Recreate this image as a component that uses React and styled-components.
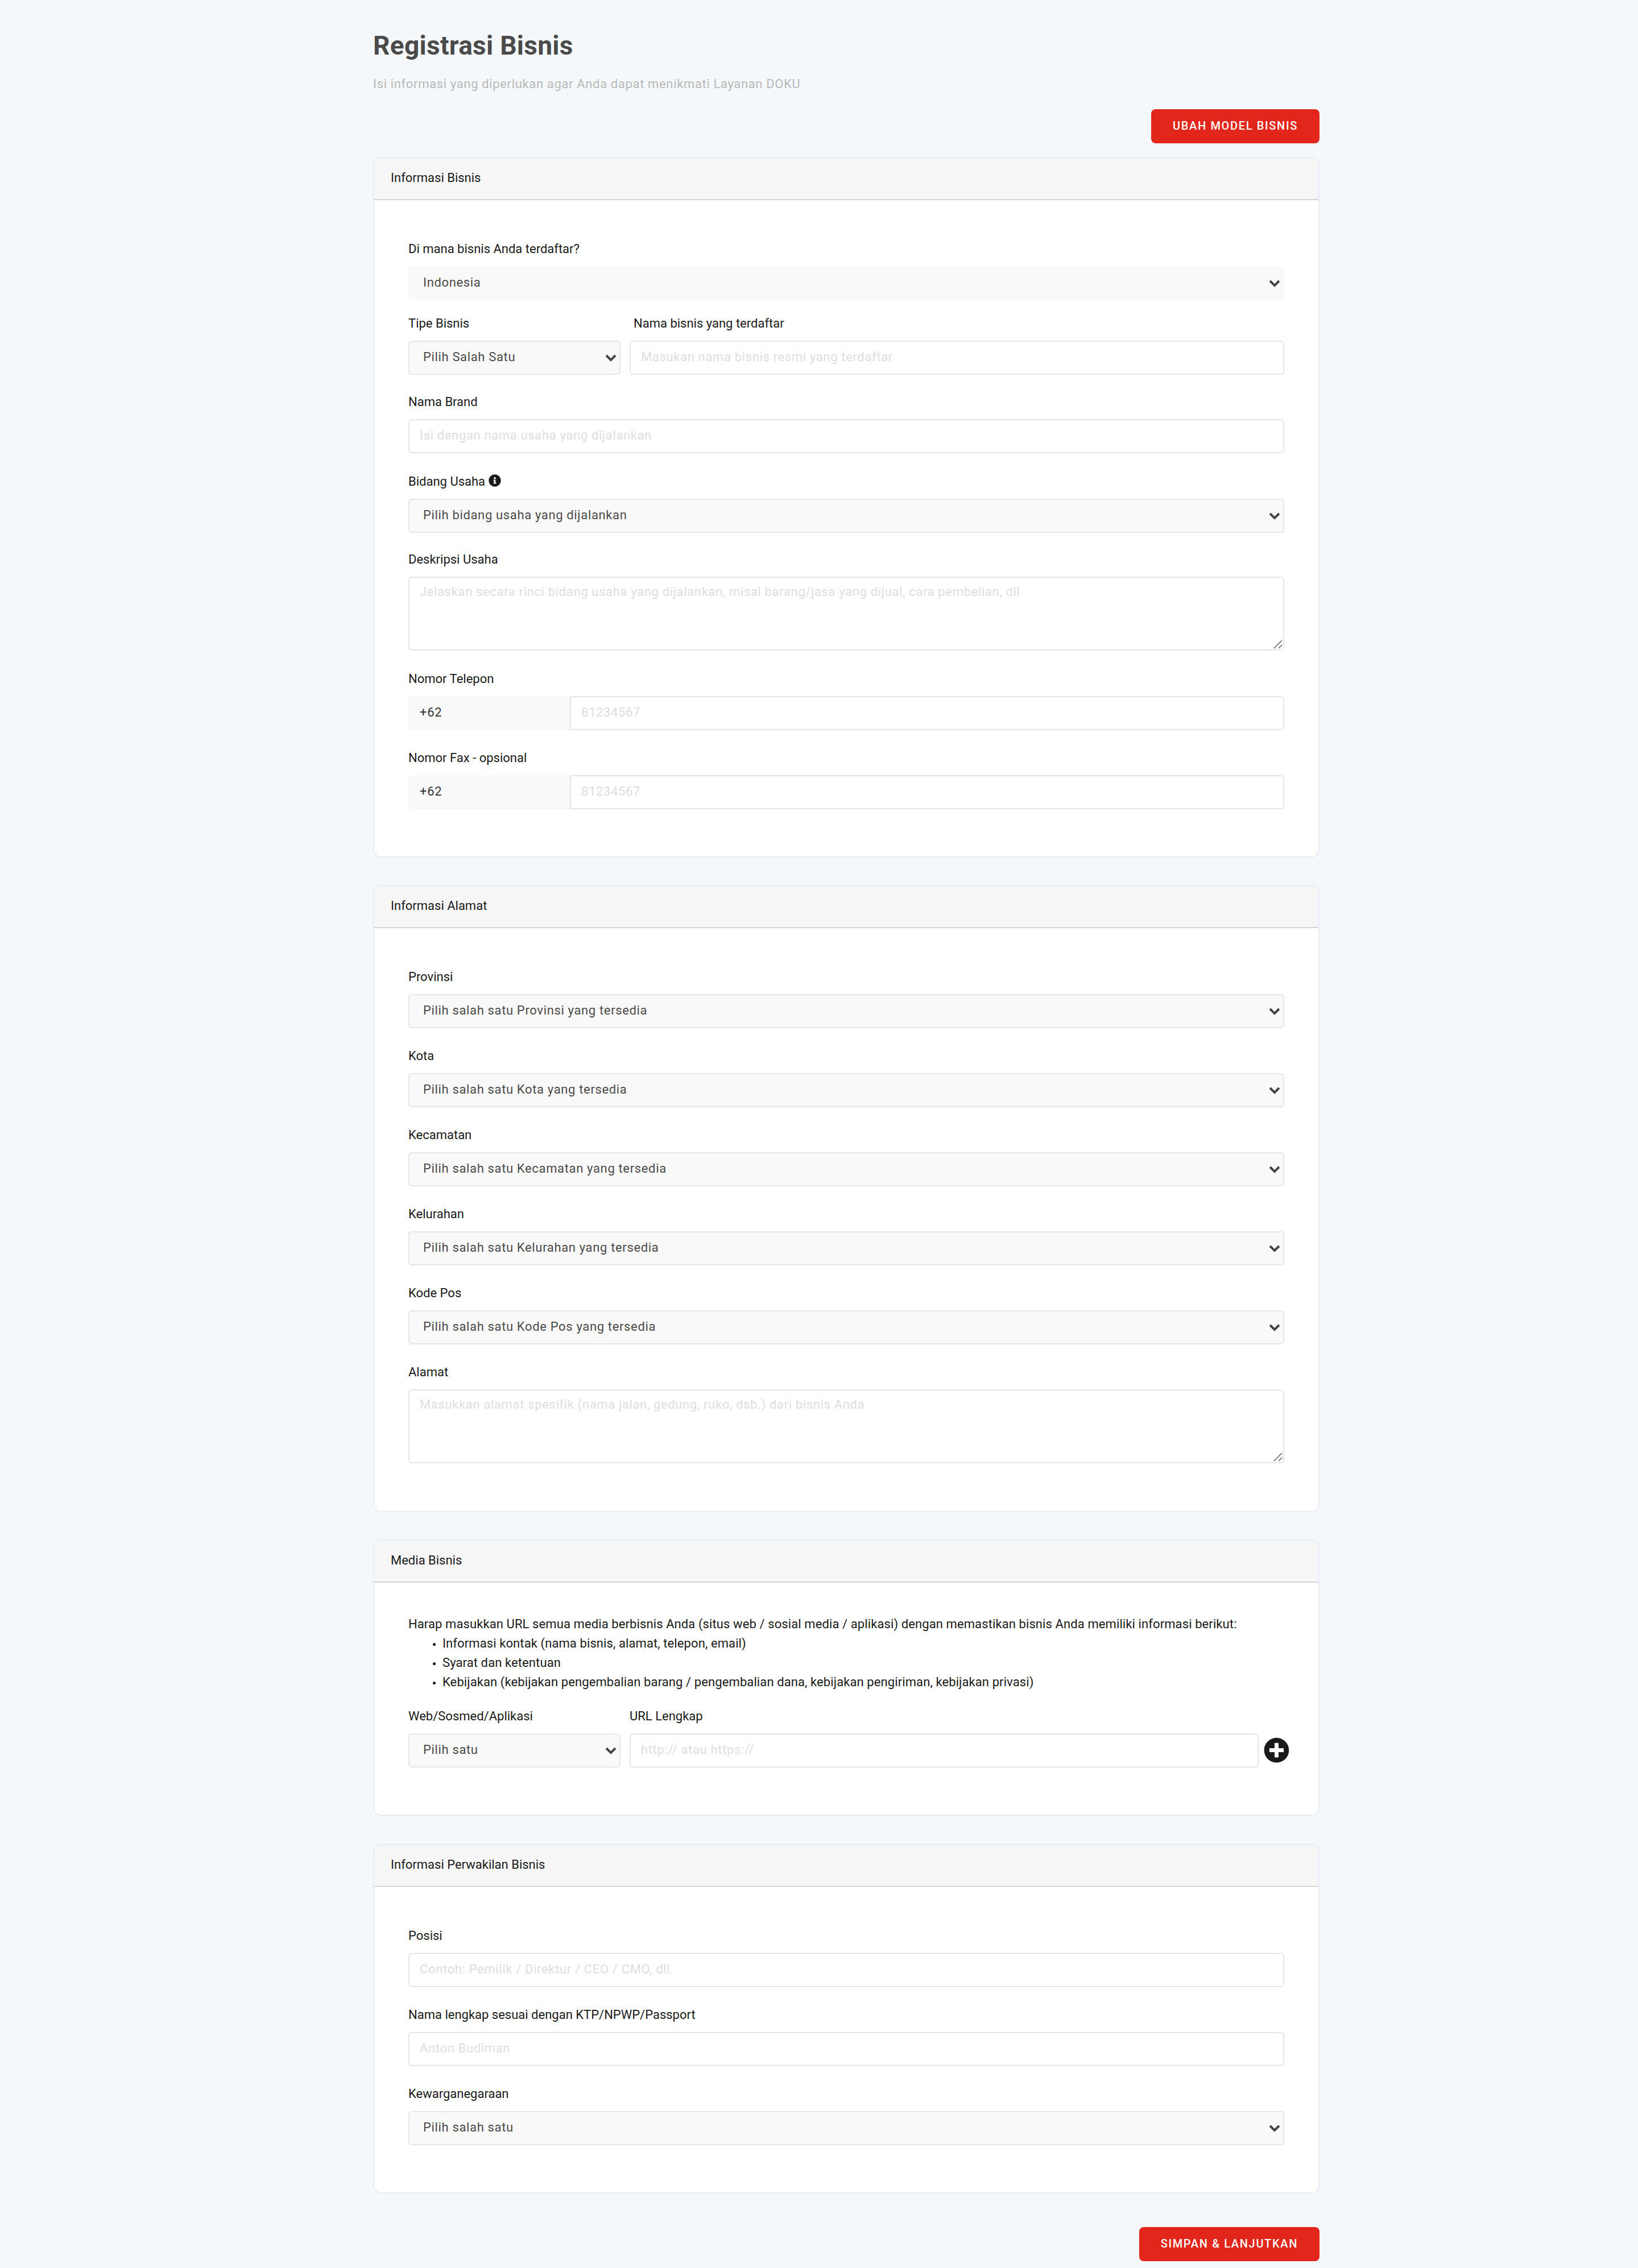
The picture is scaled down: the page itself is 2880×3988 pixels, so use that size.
import React from 'react';
import styled, { createGlobalStyle } from 'styled-components';
import { FaInfoCircle, FaPlusCircle } from 'react-icons/fa';

const GlobalStyle = createGlobalStyle`
  html, body {
    margin: 0;
    padding: 0;
    background: #f4f8fb;
  }
  body {
    font-family: Roboto, "Liberation Sans", sans-serif;
    font-size: 22px;
    color: #1a1a1a;
  }
  * {
    box-sizing: border-box;
  }
`;

const Page = styled.div`
  width: 1664px;
  margin-left: 656px;
  padding: 50px 0 12px;
`;

const Title = styled.h1`
  margin: 0;
  height: 60px;
  font-size: 46px;
  line-height: 60px;
  font-weight: 700;
  letter-spacing: 0.3px;
  color: #4a4a4a;
`;

const Subtitle = styled.p`
  margin: 23px 0 29px;
  height: 30px;
  font-size: 22px;
  line-height: 30px;
  letter-spacing: 0.65px;
  color: #b8b8b8;
`;

const Actions = styled.div`
  display: flex;
  justify-content: flex-end;
  margin: ${(p) => p.$margin || '0'};
`;

const RedButton = styled.button`
  height: 60px;
  padding: 0 38px 2px;
  border: 0;
  border-radius: 8px;
  background: #e2261c;
  color: #fff;
  font-family: inherit;
  font-size: 20px;
  font-weight: 500;
  letter-spacing: 1.65px;
  text-transform: uppercase;
`;

const Card = styled.section`
  margin-bottom: ${(p) => p.$gap || 48}px;
  background: #fff;
  border: 2px solid #e6edf4;
  border-radius: 14px;
  overflow: hidden;
`;

const CardHeader = styled.header`
  height: 74px;
  padding: 0 29px 4px;
  display: flex;
  align-items: center;
  background: #f6f6f6;
  border-bottom: 2px solid #d6d6d6;
  font-size: 22px;
`;

const CardBody = styled.div`
  padding: ${(p) => p.$top || 69}px 60px 51px;
`;

const Field = styled.div`
  margin-bottom: ${(p) => p.$gap ?? 32}px;
  min-width: 0;
`;

const Label = styled.label`
  display: flex;
  align-items: center;
  gap: 6px;
  height: 30px;
  margin-bottom: 17px;
  padding: 3px 0 0 ${(p) => p.$indent || 0}px;
  font-size: 22px;
  line-height: 27px;
  color: #1a1a1a;
`;

const SelectWrap = styled.div`
  position: relative;
  height: 60px;
`;

const Select = styled.select`
  appearance: none;
  display: block;
  width: 100%;
  height: 100%;
  padding: 0 40px 3px 24px;
  background: #f9f9f9;
  border: 2px solid ${(p) => (p.$plain ? '#f9f9f9' : '#e6e6e6')};
  border-radius: 6px;
  font-family: inherit;
  font-size: 22px;
  letter-spacing: 0.65px;
  color: #4a4a4a;
  outline: none;
`;

const Chevron = styled.svg`
  position: absolute;
  right: 7px;
  top: 23px;
  width: 20px;
  height: 14px;
  pointer-events: none;
`;

const Input = styled.input`
  display: block;
  flex: 1;
  width: 100%;
  min-width: 0;
  height: 60px;
  padding: 0 18px 3px;
  background: #fff;
  border: 2px solid #e6e6e6;
  border-radius: ${(p) => (p.$joined ? '0 6px 6px 0' : '6px')};
  font-family: inherit;
  font-size: 22px;
  letter-spacing: 0.65px;
  outline: none;
  &::placeholder {
    color: #dedede;
    opacity: 1;
  }
`;

const AreaWrap = styled.div`
  position: relative;
  height: 130px;
`;

const TextArea = styled.textarea`
  display: block;
  width: 100%;
  height: 100%;
  padding: 10px 18px;
  background: #fff;
  border: 2px solid #e6e6e6;
  border-radius: 6px;
  font-family: inherit;
  font-size: 22px;
  line-height: 30px;
  letter-spacing: 0.65px;
  resize: none;
  outline: none;
  &::placeholder {
    color: #dedede;
    opacity: 1;
  }
`;

const Grip = styled.svg`
  position: absolute;
  right: 3px;
  bottom: 3px;
  width: 16px;
  height: 16px;
  pointer-events: none;
`;

const Row = styled.div`
  display: grid;
  grid-template-columns: 373px 1fr;
  gap: 16px;
`;

const UrlLine = styled.div`
  display: flex;
  align-items: center;
`;

const AddIcon = styled(FaPlusCircle)`
  flex: none;
  margin: -2px -9px 0 9px;
  width: 45px;
  height: 45px;
  color: #1a1a1a;
`;

const InfoIcon = styled(FaInfoCircle)`
  margin-top: -3px;
  width: 22px;
  height: 22px;
  color: #1a1a1a;
`;

const PhoneGroup = styled.div`
  display: flex;
  height: 60px;
`;

const PhonePrefix = styled.div`
  flex: none;
  width: 284px;
  padding: 0 0 3px 20px;
  display: flex;
  align-items: center;
  background: #f9f9f9;
  border-radius: 6px 0 0 6px;
  font-size: 22px;
  letter-spacing: 0.65px;
  color: #333;
`;

const Intro = styled.p`
  margin: 0;
  font-size: 22px;
  line-height: 34px;
  letter-spacing: 0.1px;
`;

const Bullets = styled.ul`
  margin: 0 0 26px;
  padding-left: 60px;
  font-size: 22px;
  line-height: 34px;
  letter-spacing: 0.1px;
  li::marker {
    font-size: 16px;
  }
`;

const ChevronDown = () => (
  <Chevron viewBox="0 0 20 14">
    <path d="M2 3l8 8 8-8" fill="none" stroke="#444" strokeWidth="4" />
  </Chevron>
);

const SelectBox = ({ text, plain }) => (
  <SelectWrap>
    <Select $plain={plain} defaultValue={text}>
      <option>{text}</option>
    </Select>
    <ChevronDown />
  </SelectWrap>
);

const SelectField = ({ label, text }) => (
  <Field>
    <Label>{label}</Label>
    <SelectBox text={text} />
  </Field>
);

const InputField = ({ label, hint, gap }) => (
  <Field $gap={gap}>
    <Label>{label}</Label>
    <Input placeholder={hint} />
  </Field>
);

const AreaField = ({ label, hint }) => (
  <Field $gap={33}>
    <Label>{label}</Label>
    <AreaWrap>
      <TextArea placeholder={hint} />
      <Grip viewBox="0 0 16 16">
        <path d="M1 15L15 1M9 15l6-6" fill="none" stroke="#666" strokeWidth="1.6" />
      </Grip>
    </AreaWrap>
  </Field>
);

const PhoneField = ({ label }) => (
  <Field>
    <Label>{label}</Label>
    <PhoneGroup>
      <PhonePrefix>+62</PhonePrefix>
      <Input $joined placeholder="81234567" />
    </PhoneGroup>
  </Field>
);

const addressFields = [
  ['Provinsi', 'Pilih salah satu Provinsi yang tersedia'],
  ['Kota', 'Pilih salah satu Kota yang tersedia'],
  ['Kecamatan', 'Pilih salah satu Kecamatan yang tersedia'],
  ['Kelurahan', 'Pilih salah satu Kelurahan yang tersedia'],
  ['Kode Pos', 'Pilih salah satu Kode Pos yang tersedia'],
];

export default function App() {
  return (
    <Page>
      <GlobalStyle />
      <Title>Registrasi Bisnis</Title>
      <Subtitle>Isi informasi yang diperlukan agar Anda dapat menikmati Layanan DOKU</Subtitle>
      <Actions $margin="0 0 24px">
        <RedButton>Ubah Model Bisnis</RedButton>
      </Actions>

      <Card>
        <CardHeader>Informasi Bisnis</CardHeader>
        <CardBody>
          <Field $gap={24}>
            <Label>Di mana bisnis Anda terdaftar?</Label>
            <SelectBox plain text="Indonesia" />
          </Field>
          <Row>
            <Field $gap={31}>
              <Label>Tipe Bisnis</Label>
              <SelectBox text="Pilih Salah Satu" />
            </Field>
            <Field $gap={31}>
              <Label $indent={7}>Nama bisnis yang terdaftar</Label>
              <Input placeholder="Masukan nama bisnis resmi yang terdaftar" />
            </Field>
          </Row>
          <InputField gap={33} label="Nama Brand" hint="Isi dengan nama usaha yang dijalankan" />
          <Field $gap={30}>
            <Label>
              Bidang Usaha <InfoIcon />
            </Label>
            <SelectBox text="Pilih bidang usaha yang dijalankan" />
          </Field>
          <AreaField
            label="Deskripsi Usaha"
            hint="Jelaskan secara rinci bidang usaha yang dijalankan, misal barang/jasa yang dijual, cara pembelian, dll"
          />
          <PhoneField label="Nomor Telepon" />
          <PhoneField label="Nomor Fax - opsional" />
        </CardBody>
      </Card>

      <Card>
        <CardHeader>Informasi Alamat</CardHeader>
        <CardBody>
          {addressFields.map(([label, text]) => (
            <SelectField key={label} label={label} text={text} />
          ))}
          <AreaField
            label="Alamat"
            hint="Masukkan alamat spesifik (nama jalan, gedung, ruko, dsb.) dari bisnis Anda"
          />
        </CardBody>
      </Card>

      <Card $gap={49}>
        <CardHeader>Media Bisnis</CardHeader>
        <CardBody $top={56}>
          <Intro>
            Harap masukkan URL semua media berbisnis Anda (situs web / sosial media / aplikasi) dengan
            memastikan bisnis Anda memiliki informasi berikut:
          </Intro>
          <Bullets>
            <li>Informasi kontak (nama bisnis, alamat, telepon, email)</li>
            <li>Syarat dan ketentuan</li>
            <li>Kebijakan (kebijakan pengembalian barang / pengembalian dana, kebijakan pengiriman, kebijakan privasi)</li>
          </Bullets>
          <Row>
            <Field>
              <Label>Web/Sosmed/Aplikasi</Label>
              <SelectBox text="Pilih satu" />
            </Field>
            <Field>
              <Label>URL Lengkap</Label>
              <UrlLine>
                <Input placeholder="http:// atau https://" />
                <AddIcon />
              </UrlLine>
            </Field>
          </Row>
        </CardBody>
      </Card>

      <Card $gap={59}>
        <CardHeader>Informasi Perwakilan Bisnis</CardHeader>
        <CardBody>
          <InputField label="Posisi" hint="Contoh: Pemilik / Direktur / CEO / CMO, dll." />
          <InputField label="Nama lengkap sesuai dengan KTP/NPWP/Passport" hint="Anton Budiman" />
          <SelectField label="Kewarganegaraan" text="Pilih salah satu" />
        </CardBody>
      </Card>

      <Actions>
        <RedButton>Simpan &amp; Lanjutkan</RedButton>
      </Actions>
    </Page>
  );
}
